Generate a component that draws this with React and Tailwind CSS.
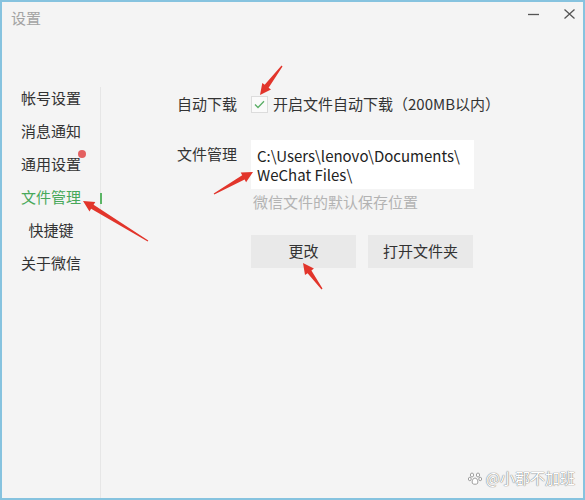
import React from "react";

const FONT = "font-['Noto_Sans_CJK_SC','Noto_Sans',sans-serif]";

const menu = [
  { label: "帐号设置" },
  { label: "消息通知" },
  { label: "通用设置", dot: true },
  { label: "文件管理", active: true },
  { label: "快捷键" },
  { label: "关于微信" },
];

// red annotation arrows drawn over the screenshot
const arrows = [
  [282, 66, 260, 95],
  [214, 194, 253, 172],
  [148, 241, 83, 201],
  [322, 289, 303, 263],
];

function arrowPoints([x1, y1, x2, y2]) {
  const len = Math.hypot(x2 - x1, y2 - y1);
  const dx = (x2 - x1) / len;
  const dy = (y2 - y1) / len;
  const nx = -dy;
  const ny = dx;
  const headLen = 11;
  const bx = x2 - dx * headLen;
  const by = y2 - dy * headLen;
  const p = (x, y, w) => [
    [x + nx * w, y + ny * w],
    [x - nx * w, y - ny * w],
  ];
  const [t1, t2] = p(x1, y1, 0.6);
  const [n1, n2] = p(bx, by, 2.4);
  const [h1, h2] = p(bx, by, 5.5);
  return [t1, n1, h1, [x2, y2], h2, n2, t2]
    .map(([x, y]) => `${x.toFixed(1)},${y.toFixed(1)}`)
    .join(" ");
}

function Sidebar() {
  return (
    <div className="w-[99px] shrink-0 pt-[52px] flex flex-col">
      <div className="flex-1 border-r border-[#e6e6e6]">
        <div className="-mt-[5px] flex flex-col">
          {menu.map((m) => (
            <div
              key={m.label}
              className={`relative h-[33px] flex items-center justify-center text-[15px] ${
                m.active ? "text-[#48a85a]" : "text-[#333]"
              }`}
            >
              <span className="relative">
                {m.label}
                {m.dot && (
                  <span className="absolute -right-[5px] -top-[3px] w-[8px] h-[8px] rounded-full bg-[#e46161]" />
                )}
              </span>
              {m.active && (
                <span className="absolute -right-[2px] top-[12px] w-[2px] h-[11px] bg-[#5bb565]" />
              )}
            </div>
          ))}
        </div>
      </div>
    </div>
  );
}

function Content() {
  return (
    <div className="flex-1 pl-[76px] pt-[56px] text-[15px] text-[#333]">
      <div className="flex items-center h-[26px]">
        <span className="w-[74px]">自动下载</span>
        <span className="w-[17px] h-[17px] border border-[#dcdcdc] bg-[#fafafa] flex items-center justify-center mr-[5px]">
          <svg width="11" height="9" viewBox="0 0 11 9">
            <path d="M1 4.5 L4 7.5 L10 1.2" fill="none" stroke="#5aae66" strokeWidth="1.3" />
          </svg>
        </span>
        <span>开启文件自动下载（200MB以内）</span>
      </div>

      <div className="flex mt-[23px]">
        <span className="w-[74px] pt-[3px] leading-[22px]">文件管理</span>
        <div className="flex flex-col">
          <div className="w-[223px] h-[49px] bg-white pl-[6px] pt-[6px] text-[15px] text-[#222]">
            <div className="h-[19px] leading-[19px]">C:\Users\lenovo\Documents\</div>
            <div className="h-[19px] leading-[19px]">WeChat Files\</div>
          </div>
          <div className="mt-[3px] pl-[2px] text-[15px] leading-[20px] text-[#b3b3b3]">
            微信文件的默认保存位置
          </div>
          <div className="flex gap-[12px] mt-[23px]">
            <button className="w-[105px] h-[33px] bg-[#e9e9e9] text-[15px] text-[#333]">
              更改
            </button>
            <button className="w-[105px] h-[33px] bg-[#e9e9e9] text-[15px] text-[#333]">
              打开文件夹
            </button>
          </div>
        </div>
      </div>
    </div>
  );
}

export default function App() {
  return (
    <div className={`relative w-[585px] h-[500px] bg-[#f4f4f4] border-2 border-[#86c3df] flex flex-col ${FONT}`}>
      <div className="h-[33px] shrink-0 flex items-start justify-between pl-[9px] pr-[8px] pt-[5px]">
        <span className="text-[15px] text-[#a3a3a3]">设置</span>
        <div className="flex items-center gap-[25px] pt-[2px]">
          <svg width="11" height="10" viewBox="0 0 11 10">
            <path d="M0 5.5 H11" stroke="#555" strokeWidth="1.3" />
          </svg>
          <svg width="11" height="10" viewBox="0 0 11 10">
            <path d="M0.5 0.5 L10.5 9.5 M10.5 0.5 L0.5 9.5" stroke="#555" strokeWidth="1.3" />
          </svg>
        </div>
      </div>
      <div className="flex-1 flex">
        <Sidebar />
        <Content />
      </div>

      <div className="absolute right-[8px] bottom-[9px] flex items-center gap-[4px] text-[15px] text-white [text-shadow:0_0_1px_#777,0_0_1px_#777]">
        <svg width="14" height="14" viewBox="0 0 14 14">
          <g fill="#fff" stroke="#888" strokeWidth="0.8">
            <ellipse cx="4" cy="4" rx="1.6" ry="2" />
            <ellipse cx="10" cy="4" rx="1.6" ry="2" />
            <ellipse cx="1.8" cy="8" rx="1.4" ry="1.7" />
            <ellipse cx="12.2" cy="8" rx="1.4" ry="1.7" />
            <path d="M7 7 C4.5 7 3.5 11 4.5 12.5 C5.5 13.5 8.5 13.5 9.5 12.5 C10.5 11 9.5 7 7 7 Z" />
          </g>
        </svg>
        <span>@小郡不加班</span>
      </div>

      <svg className="absolute -left-[2px] -top-[2px] pointer-events-none" width="585" height="500">
        {arrows.map((a, i) => (
          <polygon key={i} points={arrowPoints(a)} fill="#e2352b" />
        ))}
      </svg>
    </div>
  );
}
